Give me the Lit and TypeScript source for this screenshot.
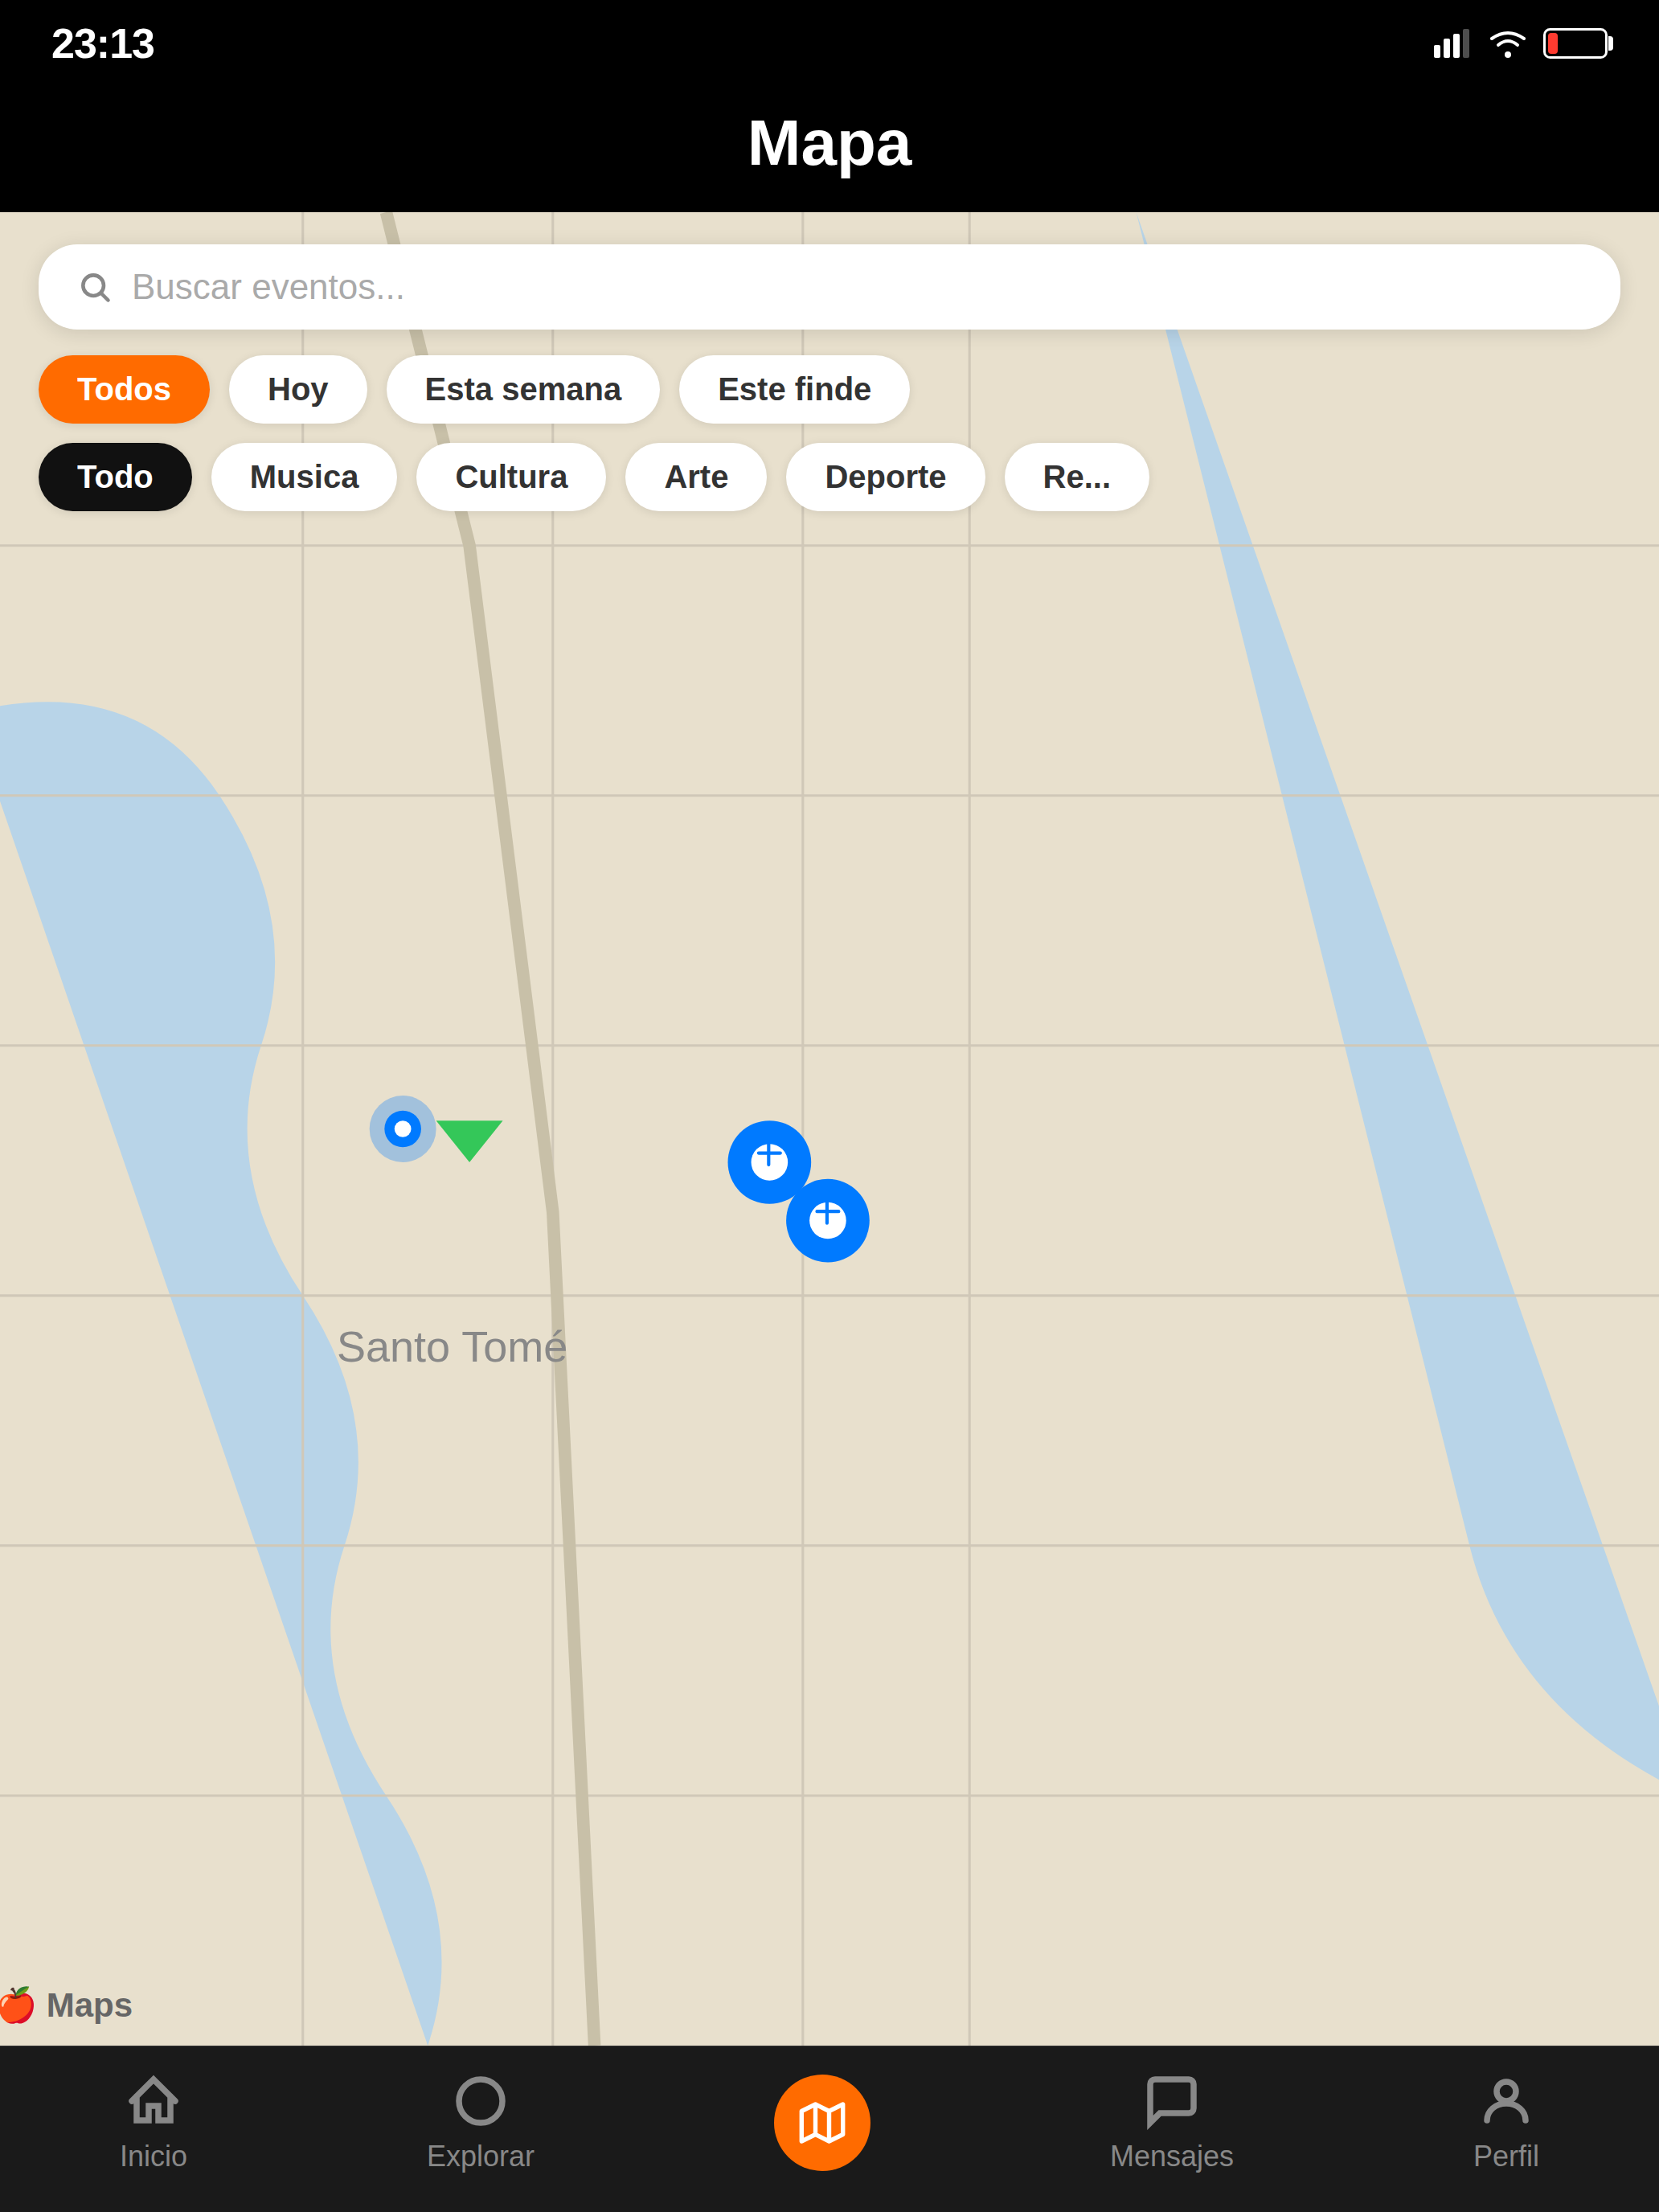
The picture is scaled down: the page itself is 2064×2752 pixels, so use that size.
import { LitElement, html, svg, css } from "lit";
import { customElement } from "lit/decorators.js";

const ROWS = [80, 140, 200, 260, 320, 380];
const COLUMNS = [70, 130, 190, 230];
const EVENTS = [
  { x: 182, y: 228 },
  { x: 196, y: 242 },
];
const DATES = ["Todos", "Hoy", "Esta semana", "Este finde"];
const CATEGORIES = ["Todo", "Musica", "Cultura", "Arte", "Deporte", "Re..."];

@customElement("status-bar")
export class StatusBar extends LitElement {
  static styles = css`
    :host {
      display: flex;
      justify-content: space-between;
      align-items: center;
      height: 108px;
      padding: 0 56px 0 64px;
      color: #fff;
    }
    .time {
      font-size: 52px;
      font-weight: 700;
      line-height: 60px;
      letter-spacing: -1px;
    }
    .icons {
      display: flex;
      align-items: center;
      gap: 22px;
    }
    svg {
      display: block;
    }
  `;

  render() {
    return html`
      <span class="time">23:13</span>
      <div class="icons">
        <svg width="48" height="36" viewBox="0 0 48 36" fill="#fff" role="img" aria-label="Cobertura">
          <rect x="0" y="20" width="8" height="16" rx="2" />
          <rect x="12" y="12" width="8" height="24" rx="2" />
          <rect x="24" y="6" width="8" height="30" rx="2" />
          <rect x="36" y="0" width="8" height="36" rx="2" opacity="0.3" />
        </svg>
        <svg width="44" height="36" viewBox="0 0 44 36" fill="none" stroke="#fff" stroke-width="4" stroke-linecap="round" role="img" aria-label="Wi-Fi">
          <path d="M2 12Q22 -2 42 12" />
          <path d="M10 20Q22 10 34 20" />
          <circle cx="22" cy="32" r="4" fill="#fff" stroke="none" />
        </svg>
        <svg width="88" height="38" viewBox="0 0 88 38" role="img" aria-label="Bateria">
          <rect x="1.5" y="1.5" width="77" height="35" rx="7" fill="none" stroke="#fff" stroke-width="3" />
          <rect x="6" y="6" width="12" height="26" rx="4" fill="#ff3b30" />
          <path d="M81 10h2a4 4 0 0 1 4 4v10a4 4 0 0 1-4 4h-2z" fill="#fff" />
        </svg>
      </div>
    `;
  }
}

@customElement("city-map")
export class CityMap extends LitElement {
  static styles = css`
    :host {
      display: block;
      position: absolute;
      inset: 0;
    }
    .canvas {
      display: block;
      width: 100%;
      height: 100%;
    }
    .place {
      position: absolute;
      left: 20.3%;
      top: 60.5%;
      font-size: 54px;
      line-height: 62px;
      color: #888;
    }
    .credit {
      position: absolute;
      left: -6px;
      bottom: 26px;
      font-size: 42px;
      font-weight: 600;
      line-height: 48px;
      color: #666;
      white-space: pre;
    }
  `;

  render() {
    return html`
      <svg class="canvas" viewBox="-0.1 0 393 440" role="img" aria-label="Mapa de eventos">
        <g fill="#b8d4e8">
          <path d="M-10 120Q30 110 50 140Q70 170 60 200Q50 230 70 260Q90 290 80 320Q70 350 90 380Q110 410 100 440Z" />
          <path d="M270 0L350 320Q360 360 403 380Z" />
        </g>
        <g stroke="#d0c8b8" stroke-width="0.6">
          ${ROWS.map((y) => svg`<path d="M-10 ${y}H403" />`)}
          ${COLUMNS.map((x) => svg`<path d="M${x} 0V440" />`)}
        </g>
        <path d="M90 0L110 80L130 240L140 440" fill="none" stroke="#c8c0a8" stroke-width="3" />
        <circle cx="94" cy="220" r="8" fill="#007aff" opacity="0.3" />
        <circle cx="94" cy="220" r="4.4" fill="#007aff" />
        <circle cx="94" cy="220" r="2" fill="#fff" />
        <path d="M102 218H118L110 228Z" fill="#34c759" />
        ${EVENTS.map(
          ({ x, y }) => svg`
            <g transform="translate(${x} ${y})">
              <circle r="10" fill="#007aff" />
              <circle r="4.4" fill="#fff" />
              <path d="M-0.2 -4.4V0.6M-2.6 -2.2H2.6" fill="none" stroke="#007aff" stroke-width="0.8" stroke-linecap="round" />
            </g>
          `,
        )}
      </svg>
      <span class="place">Santo Tomé</span>
      <span class="credit">🍎 Maps</span>
    `;
  }
}

@customElement("filter-row")
export class FilterRow extends LitElement {
  static properties = {
    options: { attribute: false },
    tone: { type: String },
    selected: { type: Number, state: true },
  };
  declare options: string[];
  declare tone: string;
  declare selected: number;

  constructor() {
    super();
    this.options = [];
    this.tone = "accent";
    this.selected = 0;
  }

  static styles = css`
    :host {
      display: flex;
      gap: 24px;
    }
    .chip {
      flex: none;
      padding: 20px 48px;
      border: 0;
      border-radius: 48px;
      background: #fff;
      color: #333;
      font: 600 40px/45px "Liberation Sans", Arial, sans-serif;
      box-shadow: 0 2px 12px rgba(0, 0, 0, 0.1);
      cursor: pointer;
    }
    .accent {
      background: #ff6b00;
      color: #fff;
    }
    .dark {
      background: #111;
      color: #fff;
    }
  `;

  render() {
    return this.options.map(
      (label, i) => html`
        <button
          class="chip ${i === this.selected ? this.tone : ""}"
          aria-pressed=${i === this.selected}
          @click=${() => (this.selected = i)}
        >${label}</button>
      `,
    );
  }
}

@customElement("search-bar")
export class SearchBar extends LitElement {
  static styles = css`
    .bar {
      display: flex;
      align-items: center;
      gap: 24px;
      padding: 28px 48px;
      border-radius: 48px;
      background: #fff;
      box-shadow: 0 4px 24px rgba(0, 0, 0, 0.12);
    }
    .field {
      flex: 1;
      min-width: 0;
      height: 50px;
      padding: 0;
      border: 0;
      outline: 0;
      background: none;
      color: #333;
      font: 44px/50px "Liberation Sans", Arial, sans-serif;
    }
    .field::placeholder {
      color: #aaa;
      opacity: 1;
    }
  `;

  render() {
    return html`
      <label class="bar">
        <svg width="44" height="44" viewBox="0 0 24 24" fill="none" stroke="#888" stroke-width="2.5" stroke-linecap="round" aria-hidden="true">
          <circle cx="11" cy="11" r="7" />
          <path d="M16.5 16.5L21 21" />
        </svg>
        <input class="field" type="text" placeholder="Buscar eventos..." aria-label="Buscar eventos" />
      </label>
    `;
  }
}

@customElement("tab-bar")
export class TabBar extends LitElement {
  static styles = css`
    :host {
      display: block;
    }
    .tabs {
      display: flex;
      justify-content: space-around;
      align-items: center;
      padding: 32px 0 48px;
      border-top: 1px solid #333;
      background: #1a1a1a;
    }
    .tab {
      display: flex;
      flex-direction: column;
      align-items: center;
      gap: 12px;
      color: #888;
      font-size: 36px;
      line-height: 42px;
      text-decoration: none;
    }
    .icon {
      display: block;
      width: 72px;
      height: 72px;
      fill: none;
      stroke: currentColor;
      stroke-width: 2.5;
    }
    .active {
      display: grid;
      place-items: center;
      width: 120px;
      height: 120px;
      border-radius: 50%;
      background: #ff6b00;
      color: #fff;
    }
    .glyph {
      display: block;
      width: 64px;
      height: 64px;
      fill: none;
      stroke: currentColor;
      stroke-width: 5.4;
      stroke-linejoin: round;
    }
  `;

  render() {
    return html`
      <nav class="tabs">
        <a class="tab" href="#inicio">
          <svg class="icon" viewBox="0 0 24 24" stroke-linecap="round" aria-hidden="true">
            <path d="M3 12L12 3L21 12M5 10V20H10V14H14V20H19V10" />
          </svg>
          Inicio
        </a>
        <a class="tab" href="#explorar">
          <svg class="icon" viewBox="0 0 24 24" aria-hidden="true"><circle cx="12" cy="12" r="9" /></svg>
          Explorar
        </a>
        <a class="active" href="#mapa" aria-label="Mapa" aria-current="page">
          <svg class="glyph" viewBox="0 0 64 64" aria-hidden="true">
            <path d="M6.3 17.5L23.5 9L40.5 17.5L57.7 9V46.5L40.5 55L23.5 46.5L6.3 55ZM23.5 9V46.5M40.5 17.5V55" />
          </svg>
        </a>
        <a class="tab" href="#mensajes">
          <svg class="icon" viewBox="0 0 24 24" aria-hidden="true">
            <path d="M21 15a2 2 0 0 1-2 2H7l-4 4V5a2 2 0 0 1 2-2h14a2 2 0 0 1 2 2z" />
          </svg>
          Mensajes
        </a>
        <a class="tab" href="#perfil">
          <svg class="icon" viewBox="0 0 24 24" stroke-linecap="round" aria-hidden="true">
            <circle cx="12" cy="8" r="4" />
            <path d="M4 20c0-4 3.6-7 8-7s8 3 8 7" />
          </svg>
          Perfil
        </a>
      </nav>
    `;
  }
}

@customElement("app-root")
export class AppRoot extends LitElement {
  static styles = css`
    :host {
      display: flex;
      flex-direction: column;
      min-height: 100vh;
      background: #000;
      font-family: "Liberation Sans", Arial, sans-serif;
    }
    .title {
      margin: 0;
      padding: 24px 0 40px;
      color: #fff;
      font-size: 80px;
      font-weight: 700;
      line-height: 92px;
      text-align: center;
    }
    .stage {
      position: relative;
      flex: 1;
      overflow: hidden;
      background: #e8e0cd;
    }
    .controls {
      position: relative;
      display: flex;
      flex-direction: column;
      gap: 24px;
      padding: 40px 48px;
    }
    .search {
      margin-bottom: 8px;
    }
  `;

  render() {
    return html`
      <status-bar></status-bar>
      <h1 class="title">Mapa</h1>
      <main class="stage">
        <city-map></city-map>
        <div class="controls">
          <search-bar class="search"></search-bar>
          <filter-row .options=${DATES} tone="accent"></filter-row>
          <filter-row .options=${CATEGORIES} tone="dark"></filter-row>
        </div>
      </main>
      <tab-bar></tab-bar>
    `;
  }
}
